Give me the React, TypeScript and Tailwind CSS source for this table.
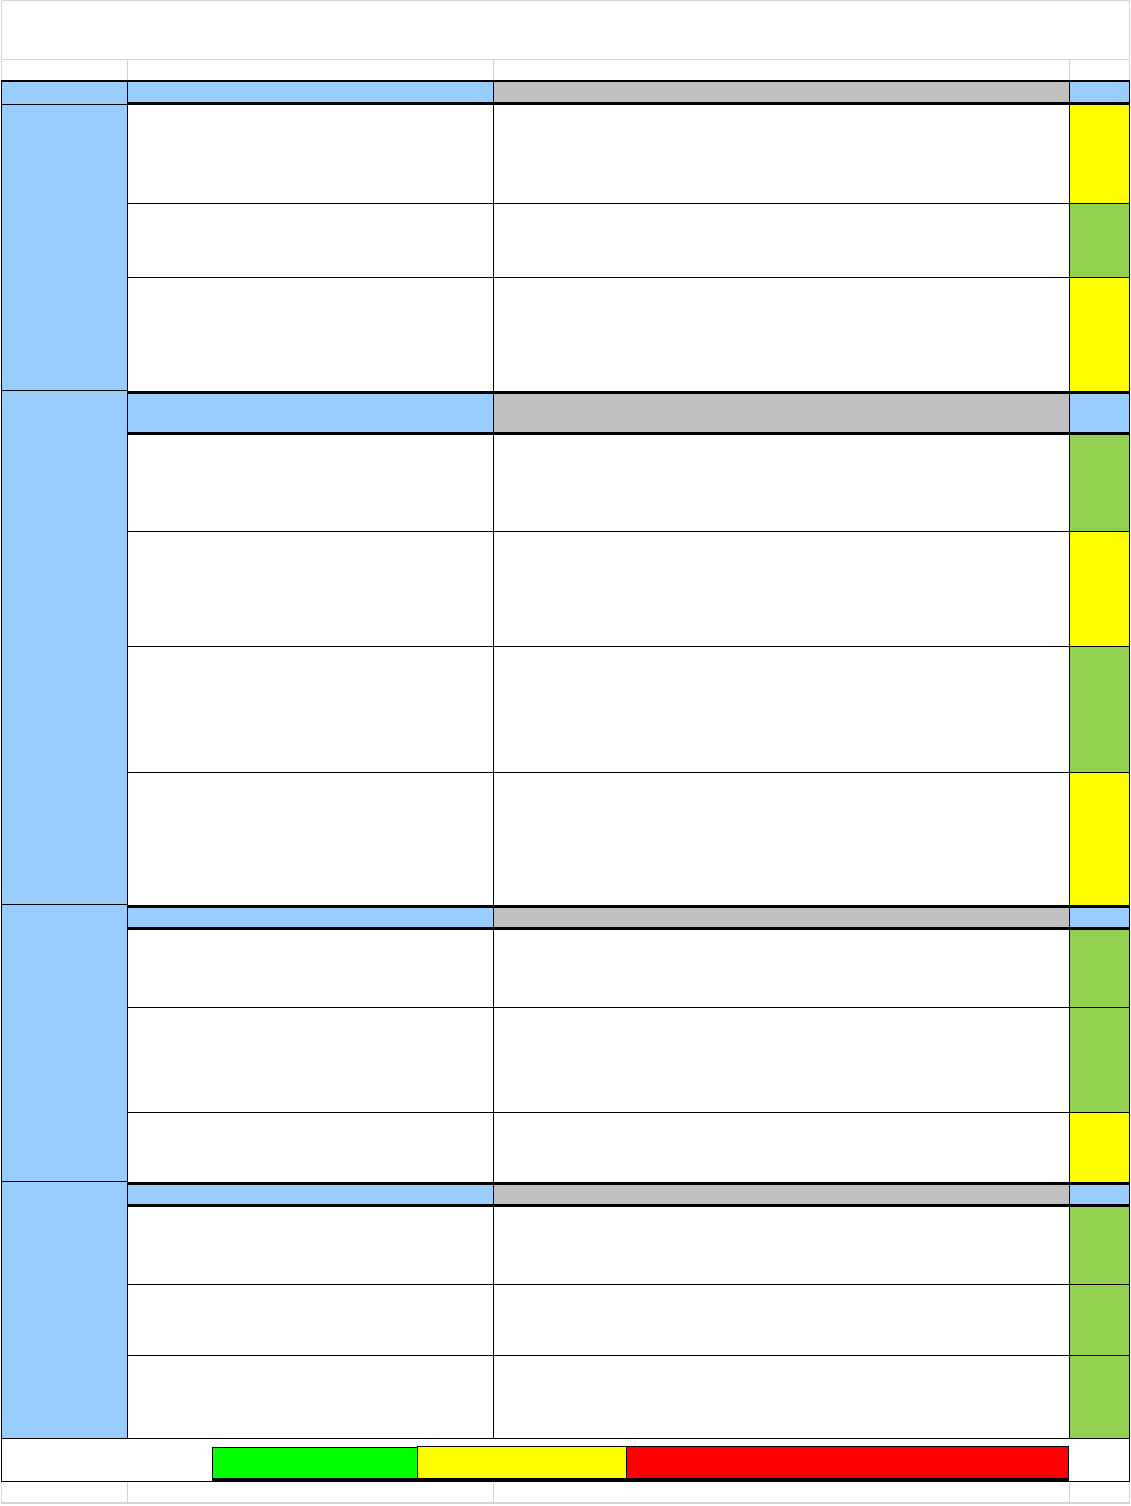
type Fill = "yellow" | "green";

interface Section {
  header: boolean;
  colA: number;
  headerH?: number;
  rows: { h: number; fill: Fill; border: boolean }[];
}

const fillClass: Record<Fill, string> = {
  yellow: "bg-[#ffff00]",
  green: "bg-[#92d050]",
};

const sections: Section[] = [
  {
    header: false,
    colA: 286,
    rows: [
      { h: 99, fill: "yellow", border: true },
      { h: 74, fill: "green", border: true },
      { h: 113, fill: "yellow", border: false },
    ],
  },
  {
    header: true,
    colA: 514,
    headerH: 44,
    rows: [
      { h: 97, fill: "green", border: true },
      { h: 115, fill: "yellow", border: true },
      { h: 126, fill: "green", border: true },
      { h: 132, fill: "yellow", border: false },
    ],
  },
  {
    header: true,
    colA: 277,
    headerH: 25,
    rows: [
      { h: 78, fill: "green", border: true },
      { h: 105, fill: "green", border: true },
      { h: 69, fill: "yellow", border: false },
    ],
  },
  {
    header: true,
    colA: 257,
    headerH: 25,
    rows: [
      { h: 78, fill: "green", border: true },
      { h: 71, fill: "green", border: true },
      { h: 83, fill: "green", border: true },
    ],
  },
];

const GrayRow = ({ className }: { className: string }) => (
  <div className={`flex border-l border-[#d4d4d4] ${className}`}>
    <div className="w-[126px] border-r border-[#d4d4d4]" />
    <div className="w-[366px] border-r border-[#d4d4d4]" />
    <div className="w-[576px] border-r border-[#d4d4d4]" />
    <div className="w-[60px] border-r border-[#d4d4d4]" />
  </div>
);

const HeaderCells = () => (
  <>
    <div className="w-[366px] bg-[#99ccff] border-r border-black" />
    <div className="w-[576px] bg-[#c0c0c0] border-r border-black" />
    <div className="flex-1 bg-[#99ccff]" />
  </>
);

const SectionBlock = ({ section }: { section: Section }) => (
  <div className="flex" style={{ height: section.colA }}>
    <div className="w-[126px] shrink-0 bg-[#99ccff] border-r border-b border-black" />
    <div className="flex-1 flex flex-col">
      {section.header && (
        <div
          className="flex border-y-[3px] border-black"
          style={{ height: section.headerH }}
        >
          <HeaderCells />
        </div>
      )}
      {section.rows.map((row, i) => (
        <div
          key={i}
          className={`flex ${row.border ? "border-b border-black" : ""}`}
          style={{ height: row.h }}
        >
          <div className="w-[366px] bg-white border-r border-black" />
          <div className="w-[576px] bg-white border-r border-black" />
          <div className={`flex-1 ${fillClass[row.fill]}`} />
        </div>
      ))}
    </div>
  </div>
);

export default function App() {
  return (
    <div className="w-[1131px] h-[1506px] bg-white pl-[1px]">
      <div className="w-[1129px]">
        {/* title row */}
        <div className="h-[60px] border border-[#d4d4d4]" />
        <GrayRow className="h-[20px]" />

        {/* table */}
        <div className="border-x border-t-2 border-black">
          <div className="flex h-[23px]">
            <div className="w-[126px] shrink-0 bg-[#99ccff] border-r border-b border-black" />
            <div className="flex-1 flex border-b-[3px] border-black">
              <HeaderCells />
            </div>
          </div>

          {sections.map((s, i) => (
            <SectionBlock key={i} section={s} />
          ))}

          {/* legend */}
          <div className="flex h-[43px] border-b border-black pl-[210px]">
            <div className="mt-[8px] h-[34px] w-[205px] bg-[#00ff00] border-l border-t border-b-[3px] border-black" />
            <div className="mt-[7px] h-[35px] w-[209px] bg-[#ffff00] border-l border-t border-b-[3px] border-black" />
            <div className="mt-[7px] h-[35px] w-[443px] bg-[#ff0000] border-l border-r border-t border-b-[3px] border-black" />
          </div>
        </div>

        <GrayRow className="h-[22px] border-b-2" />
      </div>
    </div>
  );
}
